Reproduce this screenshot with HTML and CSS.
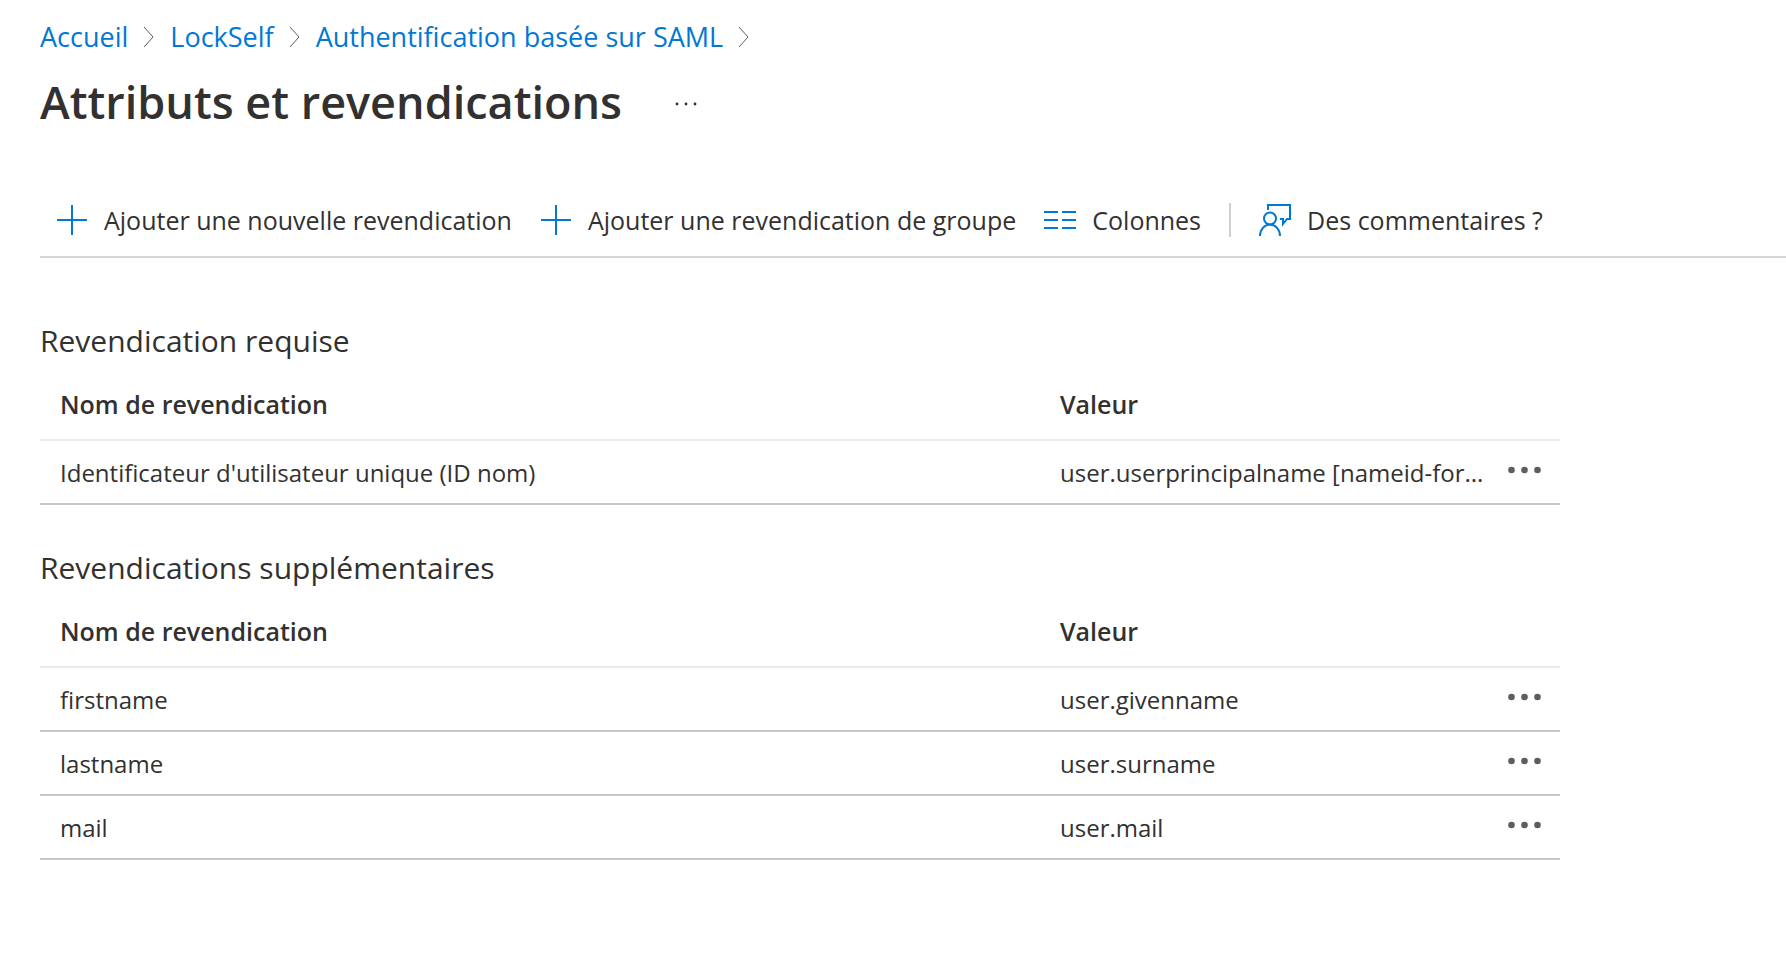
FILE: index.html
```html
<!DOCTYPE html>
<html lang="fr">
<head>
  <meta charset="UTF-8">
  <meta name="viewport" content="width=device-width, initial-scale=1.0">
  <title>Attributs et revendications</title>
  <link rel="stylesheet" href="styles.css">
</head>

<body>
  <header class="page-header">
    <nav class="breadcrumb" aria-label="Fil d'Ariane">
      <a href="#">Accueil</a>
      <svg class="chevron" viewBox="0 0 12 22"><path d="M1 1l9 10-9 10"/></svg>
      <a href="#">LockSelf</a>
      <svg class="chevron" viewBox="0 0 12 22"><path d="M1 1l9 10-9 10"/></svg>
      <a href="#">Authentification basée sur SAML</a>
      <svg class="chevron" viewBox="0 0 12 22"><path d="M1 1l9 10-9 10"/></svg>
    </nav>

    <div class="title-row">
      <h1>Attributs et revendications</h1>
      <button class="title-more" type="button" aria-label="Plus d'options">
        <svg viewBox="0 0 24 6"><circle cx="3" cy="3" r="1.4"/><circle cx="12" cy="3" r="1.4"/><circle cx="21" cy="3" r="1.4"/></svg>
      </button>
    </div>
  </header>

  <!-- Command bar -->
  <div class="toolbar">
    <button type="button">
      <svg class="icon" viewBox="0 0 32 32"><path d="M16 1v30M1 16h30"/></svg>
      Ajouter une nouvelle revendication
    </button>
    <button type="button">
      <svg class="icon" viewBox="0 0 32 32"><path d="M16 1v30M1 16h30"/></svg>
      Ajouter une revendication de groupe
    </button>
    <button type="button">
      <svg class="icon" viewBox="0 0 32 32"><path d="M0 8h14M18 8h14M0 16h14M18 16h14M0 24h14M18 24h14"/></svg>
      Colonnes
    </button>
    <span class="separator"></span>
    <button type="button">
      <svg class="icon" viewBox="0 0 32 32"><path d="M9 6V1h22v14h-3l-4 5v-5h-3"/><circle cx="11" cy="14.5" r="6"/><path d="M1 32a10 11.5 0 0 1 20 0"/></svg>
      Des commentaires ?
    </button>
  </div>

  <main class="content">
    <!-- Required claim -->
    <section>
      <h2>Revendication requise</h2>
      <table class="claims">
        <thead>
          <tr>
            <th class="col-name" scope="col">Nom de revendication</th>
            <th class="col-value" scope="col">Valeur</th>
            <td class="col-menu"></td>
          </tr>
        </thead>
        <tbody>
          <tr>
            <td>Identificateur d'utilisateur unique (ID nom)</td>
            <td>user.userprincipalname [nameid-for...</td>
            <td class="col-menu">
              <button class="row-menu" type="button" aria-label="Menu">
                <svg viewBox="0 0 34 8"><circle cx="3.5" cy="4" r="3.3"/><circle cx="16.5" cy="4" r="3.3"/><circle cx="29.5" cy="4" r="3.3"/></svg>
              </button>
            </td>
          </tr>
        </tbody>
      </table>
    </section>

    <!-- Additional claims -->
    <section>
      <h2>Revendications supplémentaires</h2>
      <table class="claims">
        <thead>
          <tr>
            <th class="col-name" scope="col">Nom de revendication</th>
            <th class="col-value" scope="col">Valeur</th>
            <td class="col-menu"></td>
          </tr>
        </thead>
        <tbody>
          <tr>
            <td>firstname</td>
            <td>user.givenname</td>
            <td class="col-menu">
              <button class="row-menu" type="button" aria-label="Menu">
                <svg viewBox="0 0 34 8"><circle cx="3.5" cy="4" r="3.3"/><circle cx="16.5" cy="4" r="3.3"/><circle cx="29.5" cy="4" r="3.3"/></svg>
              </button>
            </td>
          </tr>
          <tr>
            <td>lastname</td>
            <td>user.surname</td>
            <td class="col-menu">
              <button class="row-menu" type="button" aria-label="Menu">
                <svg viewBox="0 0 34 8"><circle cx="3.5" cy="4" r="3.3"/><circle cx="16.5" cy="4" r="3.3"/><circle cx="29.5" cy="4" r="3.3"/></svg>
              </button>
            </td>
          </tr>
          <tr>
            <td>mail</td>
            <td>user.mail</td>
            <td class="col-menu">
              <button class="row-menu" type="button" aria-label="Menu">
                <svg viewBox="0 0 34 8"><circle cx="3.5" cy="4" r="3.3"/><circle cx="16.5" cy="4" r="3.3"/><circle cx="29.5" cy="4" r="3.3"/></svg>
              </button>
            </td>
          </tr>
        </tbody>
      </table>
    </section>
  </main>
</body>
</html>
```
FILE: styles.css
```css
* {
  box-sizing: border-box;
}

body {
  margin: 0;
  padding: 16px 0 40px 40px;
  background: #fff;
  color: #323130;
  font-family: "Segoe UI", "Open Sans", "Noto Sans", sans-serif;
  font-size: 25px;
}

button {
  padding: 0;
  border: none;
  background: none;
  color: inherit;
  font: inherit;
  cursor: pointer;
}

.breadcrumb {
  display: flex;
  align-items: center;
  gap: 15px;
  font-size: 27px;
  line-height: 42px;
}

.breadcrumb a {
  color: #0078d4;
  text-decoration: none;
}

.breadcrumb a:hover {
  text-decoration: underline;
}

.chevron {
  width: 12px;
  height: 22px;
  fill: none;
  stroke: #605e5c;
}

.title-row {
  display: flex;
  align-items: center;
  gap: 52px;
  padding: 14px 0 16px;
}

h1 {
  margin: 0;
  padding-bottom: 4px;
  font-size: 45px;
  font-weight: 600;
  line-height: 60px;
}

.title-more svg {
  display: block;
  width: 24px;
  height: 6px;
  fill: #323130;
}

.toolbar {
  display: flex;
  align-items: center;
  gap: 28px;
  margin-top: 32px;
  padding: 16px;
  border-bottom: 2px solid #d6d6d6;
}

.toolbar button {
  display: flex;
  align-items: center;
  gap: 16px;
  line-height: 40px;
  white-space: nowrap;
}

.icon {
  width: 32px;
  height: 32px;
  fill: none;
  stroke: #0078d4;
  stroke-width: 2;
}

.separator {
  width: 2px;
  height: 34px;
  background: #d0d0d0;
}

.content {
  max-width: 1560px;
  padding: 63px 40px 0 0;
}

section {
  margin-bottom: 43px;
}

h2 {
  margin: 0 0 8px;
  font-size: 30px;
  font-weight: 400;
  line-height: 40px;
}

.claims {
  width: 100%;
  border-collapse: separate;
  border-spacing: 0;
  table-layout: fixed;
}

.claims th,
.claims td {
  height: 64px;
  padding: 2px 0 0 20px;
  border-bottom: 2px solid #c8c8c8;
  font-size: 24px;
  line-height: 40px;
  text-align: left;
  white-space: nowrap;
  overflow: hidden;
  text-overflow: ellipsis;
}

.claims th {
  height: 72px;
  padding: 0 0 0 20px;
  font-size: 25px;
  font-weight: 600;
}

.claims thead th,
.claims thead td {
  border-bottom-color: #edebe9;
}

.claims .col-value {
  width: 448px;
}

.claims .col-menu {
  width: 72px;
  padding: 0 0 4px 20px;
}

.row-menu {
  display: block;
}

.row-menu svg {
  display: block;
  width: 34px;
  height: 8px;
  fill: #605e5c;
}
```
